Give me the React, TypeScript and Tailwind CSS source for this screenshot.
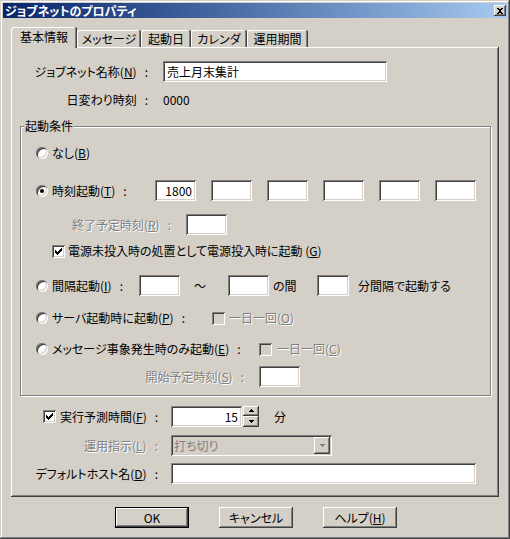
import React from "react";

// Win2000 classic bevels, drawn with inset shadows
const SUNKEN =
  "shadow-[inset_1px_1px_0_#808080,inset_-1px_-1px_0_#ffffff,inset_2px_2px_0_#404040,inset_-2px_-2px_0_#d4d0c8]";
const RAISED =
  "shadow-[inset_-1px_-1px_0_#404040,inset_1px_1px_0_#ffffff,inset_-2px_-2px_0_#808080,inset_2px_2px_0_#d4d0c8]";
const DISABLED = "text-[#808080] [text-shadow:1px_1px_0_#ffffff]";

function U({ children }: { children: React.ReactNode }) {
  return <span className="underline underline-offset-[1px]">{children}</span>;
}

// label colon, spaced wide like the original dialog font
function C() {
  return <span className="ml-[8px]">:</span>;
}

function Edit({
  className = "",
  value,
  right,
  disabled,
}: {
  className?: string;
  value?: string;
  right?: boolean;
  disabled?: boolean;
}) {
  return (
    <div
      className={`h-[21px] shrink-0 flex items-center px-[4px] ${SUNKEN} ${
        disabled ? "bg-[#d4d0c8]" : "bg-white"
      } ${right ? "justify-end" : ""} ${className}`}
    >
      {value}
    </div>
  );
}

function Radio({ checked }: { checked?: boolean }) {
  return (
    <span
      className={`inline-flex w-[12px] h-[12px] shrink-0 rounded-full bg-white items-center justify-center ${SUNKEN}`}
    >
      {checked && <span className="w-[4px] h-[4px] rounded-full bg-black" />}
    </span>
  );
}

const CHECK_ROWS: [number, number, number][] = [
  [9, 3, 1],
  [8, 4, 2],
  [3, 5, 1],
  [7, 5, 3],
  [3, 6, 2],
  [6, 6, 3],
  [3, 7, 5],
  [4, 8, 3],
  [5, 9, 1],
];

function Check({ checked, disabled }: { checked?: boolean; disabled?: boolean }) {
  return (
    <span
      className={`relative inline-block w-[13px] h-[13px] shrink-0 ${SUNKEN} ${
        disabled ? "bg-[#d4d0c8]" : "bg-white"
      }`}
    >
      {checked && (
        <svg
          className="absolute inset-0"
          width="13"
          height="13"
          viewBox="0 0 13 13"
          shapeRendering="crispEdges"
        >
          {CHECK_ROWS.map(([x, y, w], i) => (
            <rect key={i} x={x} y={y} width={w} height={1} fill="#000" />
          ))}
        </svg>
      )}
    </span>
  );
}

function Arrow({ up, color = "#000" }: { up?: boolean; color?: string }) {
  return (
    <svg width="7" height="4" viewBox="0 0 7 4" shapeRendering="crispEdges">
      {up ? (
        <>
          <rect x="3" y="0" width="1" height="1" fill={color} />
          <rect x="2" y="1" width="3" height="1" fill={color} />
          <rect x="1" y="2" width="5" height="1" fill={color} />
        </>
      ) : (
        <>
          <rect x="1" y="0" width="5" height="1" fill={color} />
          <rect x="2" y="1" width="3" height="1" fill={color} />
          <rect x="3" y="2" width="1" height="1" fill={color} />
        </>
      )}
    </svg>
  );
}

function Button({ label, def }: { label: React.ReactNode; def?: boolean }) {
  return (
    <div
      className={`w-[74px] h-[21px] flex items-center justify-center bg-[#d4d0c8] ${RAISED} ${
        def ? "border border-black" : ""
      }`}
    >
      {label}
    </div>
  );
}

const TABS = [
  { label: "基本情報", w: "w-[66px]", active: true },
  { label: "メッセージ", w: "w-[64px]" },
  { label: "起動日", w: "w-[50px]" },
  { label: "カレンダ", w: "w-[56px]" },
  { label: "運用期間", w: "w-[61px]" },
];

export default function App() {
  return (
    <div className="w-[510px] h-[539px] bg-[#d4d0c8] text-[12px] leading-[14px] text-black [font-family:'Noto_Sans_CJK_JP','Noto_Sans_CJK_SC',sans-serif] [font-feature-settings:'palt'] shadow-[inset_-1px_-1px_0_#404040,inset_1px_1px_0_#d4d0c8,inset_-2px_-2px_0_#808080,inset_2px_2px_0_#ffffff] pt-[3px] flex flex-col select-none overflow-hidden">
      {/* title bar */}
      <div className="mx-[3px] h-[15px] bg-gradient-to-r from-[#0a246a] to-[#a6caf0] flex items-center justify-between pl-[2px]">
        <span className="text-white font-bold">ジョブネットのプロパティ</span>
        <span
          className={`mr-[1px] w-[12px] h-[11px] bg-[#d4d0c8] flex items-center justify-center ${RAISED}`}
        >
          <svg width="6" height="6" viewBox="0 0 6 6" shapeRendering="crispEdges">
            <rect x="0" y="0" width="2" height="1" />
            <rect x="4" y="0" width="2" height="1" />
            <rect x="1" y="1" width="4" height="1" />
            <rect x="2" y="2" width="2" height="2" />
            <rect x="1" y="4" width="4" height="1" />
            <rect x="0" y="5" width="2" height="1" />
            <rect x="4" y="5" width="2" height="1" />
          </svg>
        </span>
      </div>

      {/* tabs */}
      <div className="mt-[9px] ml-[11px] flex items-end h-[20px]">
        {TABS.map((t) => (
          <div
            key={t.label}
            className={`${t.w} flex items-center justify-center rounded-t-[2px] bg-[#d4d0c8] shadow-[inset_-1px_0_0_#404040,inset_1px_1px_0_#ffffff,inset_-2px_0_0_#808080] ${
              t.active ? "relative z-10 h-[21px] -mb-px pb-[2px]" : "h-[17px] pt-[1px]"
            }`}
          >
            {t.label}
          </div>
        ))}
      </div>

      {/* tab panel */}
      <div className="ml-[11px] w-[488px] h-[450px] shrink-0 flex flex-col shadow-[inset_-1px_-1px_0_#404040,inset_1px_1px_0_#ffffff,inset_-2px_-2px_0_#808080]">
        <div className="mt-[14px] h-[21px] flex items-center">
          <span className="w-[137px] text-right whitespace-nowrap">
            ジョブネット名称(<U>N</U>)<C />
          </span>
          <Edit className="ml-[15px] w-[224px]" value="売上月末集計" />
        </div>
        <div className="mt-[8px] h-[20px] flex items-center">
          <span className="w-[137px] text-right whitespace-nowrap">
            日変わり時刻<C />
          </span>
          <span className="ml-[15px]">0000</span>
        </div>

        {/* group box */}
        <div className="relative mt-[16px] ml-[9px] w-[471px] h-[270px] shrink-0 border border-[#808080] shadow-[inset_1px_1px_0_#ffffff,1px_1px_0_#ffffff] flex flex-col">
          <span className="absolute left-[3px] top-[-8px] px-[1px] bg-[#d4d0c8]">起動条件</span>

          <div className="mt-[16px] h-[20px] pl-[15px] flex items-center">
            <Radio />
            <span className="ml-[4px]">
              なし(<U>B</U>)
            </span>
          </div>

          <div className="mt-[17px] h-[21px] pl-[15px] flex items-center">
            <Radio checked />
            <span className="ml-[4px] w-[103px] whitespace-nowrap">
              時刻起動(<U>T</U>)<C />
            </span>
            <div className="flex gap-[15px]">
              <Edit className="w-[41px]" value="1800" right />
              <Edit className="w-[41px]" />
              <Edit className="w-[41px]" />
              <Edit className="w-[41px]" />
              <Edit className="w-[41px]" />
              <Edit className="w-[41px]" />
            </div>
          </div>

          <div className="mt-[13px] h-[21px] flex items-center">
            <span className={`w-[150px] text-right whitespace-nowrap ${DISABLED}`}>
              終了予定時刻(<U>R</U>)<C />
            </span>
            <Edit className="ml-[15px] w-[41px]" />
          </div>

          <div className="mt-[6px] h-[20px] pl-[31px] flex items-center">
            <Check checked />
            <span className="ml-[3px] whitespace-nowrap">
              電源未投入時の処置として電源投入時に起動 (<U>G</U>)
            </span>
          </div>

          <div className="mt-[14px] h-[21px] pl-[15px] flex items-center">
            <Radio />
            <span className="ml-[4px] w-[87px] whitespace-nowrap">
              間隔起動(<U>I</U>)<C />
            </span>
            <Edit className="w-[41px]" />
            <span className="w-[48px] pl-[14px]">～</span>
            <Edit className="w-[41px]" />
            <span className="ml-[4px] w-[44px]">の間</span>
            <Edit className="w-[32px]" />
            <span className="ml-[9px] whitespace-nowrap">分間隔で起動する</span>
          </div>

          <div className="mt-[12px] h-[20px] pl-[15px] flex items-center">
            <Radio />
            <span className="ml-[4px] w-[160px] whitespace-nowrap">
              サーバ起動時に起動(<U>P</U>)<C />
            </span>
            <Check disabled />
            <span className={`ml-[4px] ${DISABLED}`}>
              一日一回(<U>O</U>)
            </span>
          </div>

          <div className="mt-[11px] h-[20px] pl-[15px] flex items-center">
            <Radio />
            <span className="ml-[4px] w-[207px] whitespace-nowrap">
              メッセージ事象発生時のみ起動(<U>E</U>)<C />
            </span>
            <Check disabled />
            <span className={`ml-[5px] ${DISABLED}`}>
              一日一回(<U>C</U>)
            </span>
          </div>

          <div className="mt-[7px] h-[21px] flex items-center">
            <span className={`w-[223px] text-right whitespace-nowrap ${DISABLED}`}>
              開始予定時刻(<U>S</U>)<C />
            </span>
            <Edit className="ml-[15px] w-[41px]" />
          </div>
        </div>

        {/* lower fields */}
        <div className="mt-[10px] h-[21px] flex items-center">
          <span className="ml-[32px] flex">
            <Check checked />
          </span>
          <span className="ml-[4px] w-[111px] whitespace-nowrap">
            実行予測時間(<U>F</U>)<C />
          </span>
          <Edit className="w-[71px]" value="15" right />
          <div className="ml-[1px] w-[16px] h-[21px] flex flex-col">
            <span className={`h-[10px] flex items-center justify-center bg-[#d4d0c8] ${RAISED}`}>
              <Arrow up />
            </span>
            <span className={`h-[11px] flex items-center justify-center bg-[#d4d0c8] ${RAISED}`}>
              <Arrow />
            </span>
          </div>
          <span className="ml-[15px]">分</span>
        </div>

        <div className="mt-[8px] h-[21px] flex items-center">
          <span className={`w-[147px] text-right whitespace-nowrap ${DISABLED}`}>
            運用指示(<U>L</U>)<C />
          </span>
          <div
            className={`ml-[13px] w-[161px] h-[21px] bg-[#d4d0c8] flex items-center justify-between pl-[3px] pr-[2px] ${SUNKEN}`}
          >
            <span className="text-[#808080]">打ち切り</span>
            <span
              className={`w-[16px] h-[17px] flex items-center justify-center bg-[#d4d0c8] ${RAISED}`}
            >
              <Arrow color="#808080" />
            </span>
          </div>
        </div>

        <div className="mt-[7px] h-[21px] flex items-center">
          <span className="w-[147px] text-right whitespace-nowrap">
            デフォルトホスト名(<U>D</U>)<C />
          </span>
          <Edit className="ml-[13px] w-[305px]" />
        </div>
      </div>

      {/* dialog buttons */}
      <div className="mt-[10px] flex justify-center gap-[30px] pl-[2px]">
        <Button label="OK" def />
        <Button label="キャンセル" />
        <Button
          label={
            <>
              ヘルプ(<U>H</U>)
            </>
          }
        />
      </div>
    </div>
  );
}
